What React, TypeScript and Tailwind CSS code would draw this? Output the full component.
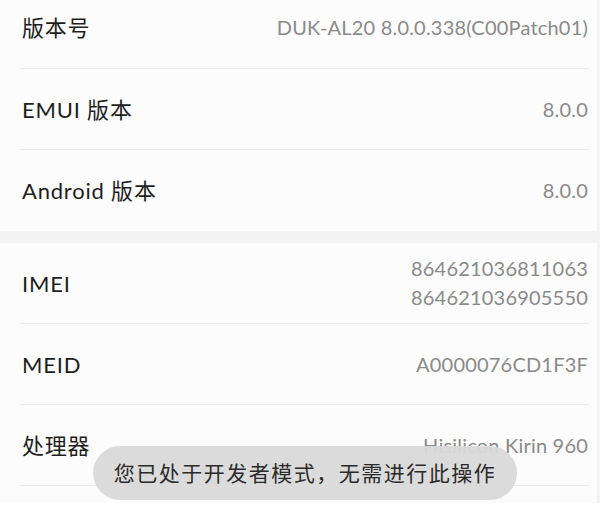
import React from "react";

const font = { fontFamily: '"Lato", "Noto Sans CJK SC", sans-serif' };

type Row = { label: string; values: string[] };

const groupA: Row[] = [
  { label: "版本号", values: ["DUK-AL20 8.0.0.338(C00Patch01)"] },
  { label: "EMUI 版本", values: ["8.0.0"] },
  { label: "Android 版本", values: ["8.0.0"] },
];

const groupB: Row[] = [
  { label: "IMEI", values: ["864621036811063", "864621036905550"] },
  { label: "MEID", values: ["A0000076CD1F3F"] },
  { label: "处理器", values: ["Hisilicon Kirin 960"] },
];

function InfoRow({ row, first, last }: { row: Row; first?: boolean; last?: boolean }) {
  return (
    <div className="pl-[20px] pr-[8px]">
      <div
        className={
          "flex items-center justify-between " +
          (first ? "h-[69px] pb-[13px] " : "h-[81px] ") +
          (last ? "" : "border-b border-[#ebebeb]")
        }
      >
        <span className="pl-[2px] text-[22px] text-[#1e1e1e] tracking-[0.8px]">{row.label}</span>
        <div className="flex flex-col items-end pr-[1px] text-[20px] leading-[29px] text-[#8a8a8a] tracking-[0.2px]">
          {row.values.map((v) => (
            <span key={v}>{v}</span>
          ))}
        </div>
      </div>
    </div>
  );
}

export default function App() {
  return (
    <div className="relative w-[600px] h-[512px] overflow-hidden bg-white" style={font}>
      <div className="h-[503px] overflow-hidden bg-[#fcfcfc] border-r-[3px] border-[#f3f3f3]">
        {groupA.map((r, i) => (
          <InfoRow key={r.label} row={r} first={i === 0} last={i === groupA.length - 1} />
        ))}
        <div className="h-[12px] bg-[#f3f3f3]" />
        {groupB.map((r) => (
          <InfoRow key={r.label} row={r} />
        ))}
      </div>

      {/* toast */}
      <div className="absolute left-[93px] top-[446px] w-[424px] h-[54px] rounded-full bg-[#d9d9d9]/95 flex items-center justify-center">
        <span className="text-[21px] text-[#2a2a2a] tracking-[1.5px]" style={{ fontFamily: '"Noto Sans CJK SC", sans-serif' }}>
          您已处于开发者模式，无需进行此操作
        </span>
      </div>
    </div>
  );
}
